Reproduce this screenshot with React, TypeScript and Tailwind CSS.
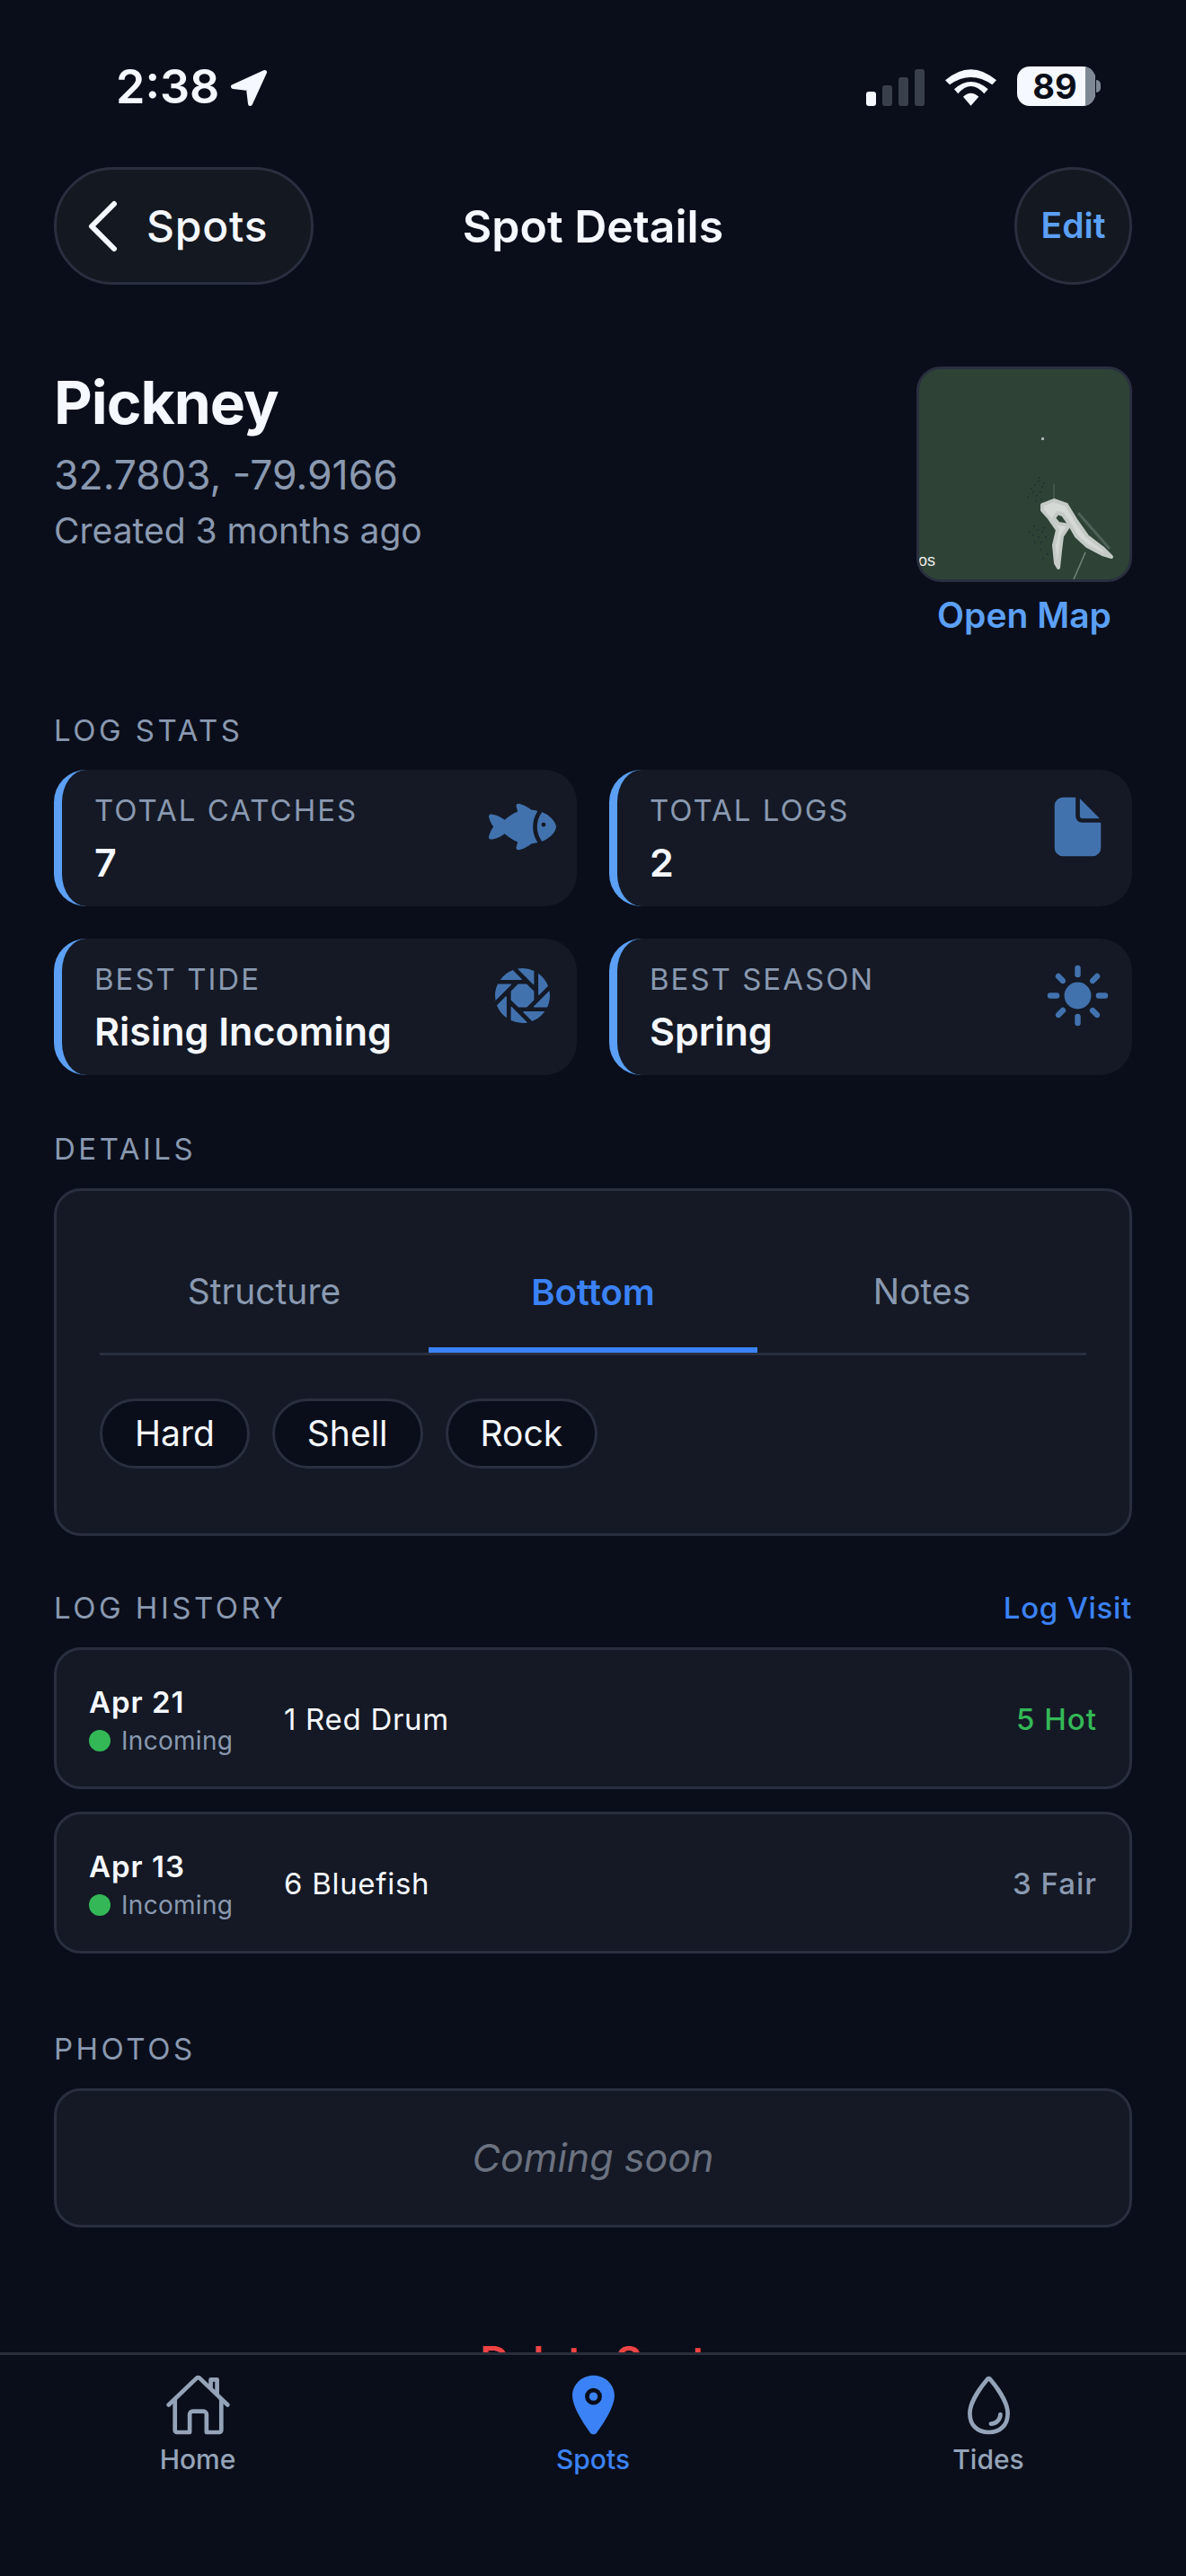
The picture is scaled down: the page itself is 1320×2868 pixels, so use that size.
import type { ReactNode } from "react";
import { IoFish, IoDocument, IoAperture, IoSunny, IoHomeOutline, IoLocation, IoWaterOutline } from "react-icons/io5";

const font = { fontFamily: "Inter, sans-serif" };

function SectionLabel({ children }: { children: string }) {
  return <div className="text-[33px] leading-[40px] tracking-[3.5px] text-[#8a99b0]">{children}</div>;
}

function Stat({ label, value, icon }: { label: string; value: string; icon: ReactNode }) {
  return (
    <div className="relative h-[152px] rounded-[36px] border-l-[9px] border-[#5ba0f5] bg-[#141925] pl-[36px] pt-[25px]">
      <div className="text-[33px] leading-[40px] tracking-[2px] text-[#8a99b0]">{label}</div>
      <div className="mt-[12px] text-[43px] leading-[52px] font-semibold text-[#f5f8ff]">{value}</div>
      <div className="absolute right-[23px] top-[26px] text-[#4272ae]">{icon}</div>
    </div>
  );
}

function LogRow({ date, catchText, rating, color }: { date: string; catchText: string; rating: string; color: string }) {
  return (
    <div className="flex h-[158px] items-center rounded-[30px] border-[3px] border-[#2a2f3f] bg-[#141925] px-[36px] pt-[4px]">
      <div className="w-[217px]">
        <div className="text-[33px] leading-[44px] font-semibold tracking-[1px] text-[#f5f8ff]">{date}</div>
        <div className="mt-[2px] flex items-center gap-[12px]">
          <div className="h-[24px] w-[24px] rounded-full bg-[#34b857]" />
          <div className="text-[28px] leading-[38px] tracking-[0.3px] text-[#8a99b0]">Incoming</div>
        </div>
      </div>
      <div className="flex-1 text-[33px] tracking-[0.7px] text-[#f5f8ff]">{catchText}</div>
      <div className={`text-[33px] font-medium tracking-[1px] ${color}`}>{rating}</div>
    </div>
  );
}

function Signal() {
  return (
    <div className="flex items-end gap-[7px]">
      <div className="h-[16px] w-[11px] rounded-[3px] bg-[#f5f8ff]" />
      <div className="h-[23px] w-[11px] rounded-[3px] bg-[#3a3f4c]" />
      <div className="h-[32px] w-[11px] rounded-[3px] bg-[#3a3f4c]" />
      <div className="h-[41px] w-[11px] rounded-[3px] bg-[#3a3f4c]" />
    </div>
  );
}

function Wifi() {
  return (
    <svg width="57" height="41" viewBox="0 0 57 41" fill="#f5f8ff">
      <path d="M0 12.3Q28.5-12 57 12.3L52.3 17.3Q28.5 .7 5 17.3Z" />
      <path d="M10 22.3Q28.5 5.7 47.7 22.3L43.3 27.3Q28.5 10.7 14.3 27.3Z" />
      <path d="M20 30.7Q28.5 22.7 37.3 30.7L28.5 40.7Z" />
    </svg>
  );
}

function Arrow() {
  return (
    <svg width="42" height="42" viewBox="0 0 42 42" fill="#f5f8ff" stroke="#f5f8ff" strokeWidth="5" strokeLinejoin="round">
      <path d="M38.5 3.5L3.5 19.5L20.5 21.5L22.5 38.5Z" />
    </svg>
  );
}

const specks = [
  [128, 128], [132, 124], [136, 130], [126, 136], [130, 140], [134, 136], [138, 126], [124, 132], [129, 146], [135, 144],
  [120, 142], [133, 120], [127, 174], [131, 178], [136, 180], [126, 184], [132, 186], [138, 176], [122, 180], [140, 186],
  [128, 192], [135, 192], [142, 205], [137, 210], [134, 200],
];

function Map() {
  return (
    <div className="relative h-[240px] w-[240px] overflow-hidden rounded-[27px] border-[3px] border-[#2a2f3f] bg-[#2e4336]">
      <svg width="234" height="234" viewBox="0 0 234 234" className="absolute left-0 top-0">
        {specks.map(([x, y]) => (
          <rect key={`${x}-${y}`} x={x} y={y} width="1.5" height="1.5" fill="#1d2a32" />
        ))}
        <rect x="136" y="76" width="3" height="3" fill="#a7b0b0" />
        <path d="M177 160L212 200" stroke="#4f6158" strokeWidth="3" />
        <path d="M185 204L172 234" stroke="#75847c" strokeWidth="1.5" fill="none" />
        <path d="M150 128L150 148" stroke="#566a5e" strokeWidth="1" />
        <path
          d="M137 151L150 146L164 151L175 169L187 186L204 199L214 209L204 206L187 197L175 186L167 172L160 162L154 160L150 166L155 172L167 174L159 186L157 202L155 221L152 216L150 196L154 179L145 166L137 157Z"
          fill="#d5d9d6"
          stroke="#c4cac6"
          strokeWidth="4"
          strokeLinejoin="round"
        />
      </svg>
      <span className="absolute bottom-[11px] left-[-1px] text-[18px] leading-[20px] text-[#f0f0f0]" style={{ fontFamily: "Liberation Sans, sans-serif" }}>os</span>
    </div>
  );
}

function Tab({ icon, label, active }: { icon: ReactNode; label: string; active?: boolean }) {
  return (
    <div className={`flex w-[440px] flex-col items-center ${active ? "text-[#3b82f6]" : "text-[#94a3b8]"}`}>
      {icon}
      <div className="mt-[5px] text-[30px] leading-[36px] font-medium">{label}</div>
    </div>
  );
}

export default function App() {
  return (
    <div className="relative h-[2868px] w-[1320px] overflow-hidden bg-[#0a0e1a]" style={font}>
      {/* status bar */}
      <div className="flex h-[186px] items-start justify-between pl-[129px] pr-[95px] pt-[66px]">
        <div className="flex items-start gap-[12px]">
          <span className="text-[52px] leading-[62px] font-semibold text-[#f5f8ff]">2:38</span>
          <div className="mt-[11px]"><Arrow /></div>
        </div>
        <div className="mt-[8px] flex items-end gap-[23px]">
          <Signal />
          <Wifi />
          <div className="flex items-center">
            <div className="relative flex h-[44px] w-[87px] items-center justify-center overflow-hidden rounded-[14px] bg-[#f5f8ff] pr-[3px] text-[38px] leading-[44px] font-bold text-[#0a0e1a]">
              89
              <div className="absolute right-0 top-0 h-full w-[11px] bg-[#7e8794]" />
            </div>
            <div className="ml-[1px] h-[14px] w-[5px] rounded-r-full bg-[#7e8794]" />
          </div>
        </div>
      </div>

      {/* header */}
      <div className="flex h-[131px] items-center px-[60px]">
        <div className="flex flex-1">
          <div className="flex h-[131px] w-[289px] items-center gap-[31px] rounded-full border-[3px] border-[#2a2f3f] bg-[#141820] pl-[33px]">
            <svg width="36" height="58" viewBox="0 0 36 58" fill="none" stroke="#f5f8ff" strokeWidth="6" strokeLinecap="round" strokeLinejoin="round">
              <path d="M31 4L6 29L31 54" />
            </svg>
            <span className="text-[48px] font-medium tracking-[0.8px] text-[#f5f8ff]">Spots</span>
          </div>
        </div>
        <div className="pt-[2px] text-[50px] font-semibold text-[#f5f8ff]">Spot Details</div>
        <div className="flex flex-1 justify-end">
          <div className="flex h-[131px] w-[131px] items-center justify-center rounded-full border-[3px] border-[#2a2f3f] bg-[#141820] text-[39px] font-semibold text-[#5ba0f5]">Edit</div>
        </div>
      </div>

      {/* hero */}
      <div className="mt-[91px] flex justify-between px-[60px]">
        <div>
          <div className="text-[66px] leading-[80px] font-bold tracking-[-1px] text-[#f5f8ff]">Pickney</div>
          <div className="mt-[13px] text-[44.5px] leading-[56px] text-[#8a99b0]">32.7803, -79.9166</div>
          <div className="mt-[10px] text-[39px] leading-[48px] text-[#8a99b0]">Created 3 months ago</div>
        </div>
        <div className="flex flex-col items-center">
          <Map />
          <div className="mt-[14px] text-[39px] leading-[46px] font-semibold text-[#5ba0f5]">Open Map</div>
        </div>
      </div>

      {/* stats */}
      <div className="mt-[85px] px-[60px]">
        <SectionLabel>LOG STATS</SectionLabel>
        <div className="mt-[24px] grid grid-cols-2 gap-[36px]">
          <Stat label="TOTAL CATCHES" value="7" icon={<IoFish size={75} />} />
          <Stat label="TOTAL LOGS" value="2" icon={<IoDocument size={75} />} />
          <Stat label="BEST TIDE" value="Rising Incoming" icon={<IoAperture size={75} />} />
          <Stat label="BEST SEASON" value="Spring" icon={<IoSunny size={75} />} />
        </div>
      </div>

      {/* details */}
      <div className="mt-[62px] px-[60px]">
        <SectionLabel>DETAILS</SectionLabel>
        <div className="mt-[24px] h-[387px] rounded-[30px] border-[3px] border-[#2a2f3f] bg-[#141925] px-[48px]">
          <div className="flex h-[183px] border-b-[3px] border-[#2a2f3f] pt-[30px]">
            <div className="flex h-[150px] w-[366px] items-center justify-center border-b-[6px] border-transparent pt-[21px] text-[39px] text-[#8a99b0]">Structure</div>
            <div className="flex h-[150px] w-[366px] items-center justify-center border-b-[6px] border-[#3b82f6] pt-[21px] text-[40px] font-semibold text-[#3b82f6]">Bottom</div>
            <div className="flex h-[150px] w-[366px] items-center justify-center border-b-[6px] border-transparent pt-[21px] text-[39px] text-[#8a99b0]">Notes</div>
          </div>
          <div className="mt-[48px] flex gap-[25px]">
            {["Hard", "Shell", "Rock"].map((c) => (
              <div key={c} className="flex h-[78px] items-center rounded-full border-[3px] border-[#2a2f3f] bg-[#0a0e1a] px-[36px] text-[39px] text-[#f5f8ff]">{c}</div>
            ))}
          </div>
        </div>
      </div>

      {/* history */}
      <div className="mt-[60px] px-[60px]">
        <div className="flex items-center justify-between">
          <SectionLabel>LOG HISTORY</SectionLabel>
          <div className="text-[33px] leading-[40px] font-medium tracking-[0.7px] text-[#3b82f6]">Log Visit</div>
        </div>
        <div className="mt-[24px] flex flex-col gap-[25px]">
          <LogRow date="Apr 21" catchText="1 Red Drum" rating="5 Hot" color="text-[#34b857]" />
          <LogRow date="Apr 13" catchText="6 Bluefish" rating="3 Fair" color="text-[#8a99b0]" />
        </div>
      </div>

      {/* photos */}
      <div className="mt-[86px] px-[60px]">
        <SectionLabel>PHOTOS</SectionLabel>
        <div className="mt-[24px] flex h-[155px] items-center justify-center rounded-[30px] border-[3px] border-[#2a2f3f] bg-[#141925] text-[43px] text-[#6b7280] italic">Coming soon</div>
      </div>

      <div className="mt-[120px] text-center text-[45px] leading-[58px] font-semibold text-[#ef4444]">Delete Spot</div>

      {/* tab bar */}
      <div className="absolute bottom-0 left-0 flex h-[249px] w-full border-t-[3px] border-[#2a2e3a] bg-[#0a0e1a] pt-[18px]">
        <Tab label="Home" icon={<IoHomeOutline size={75} />} />
        <Tab active label="Spots" icon={<IoLocation size={75} />} />
        <Tab label="Tides" icon={<IoWaterOutline size={75} />} />
      </div>
    </div>
  );
}
